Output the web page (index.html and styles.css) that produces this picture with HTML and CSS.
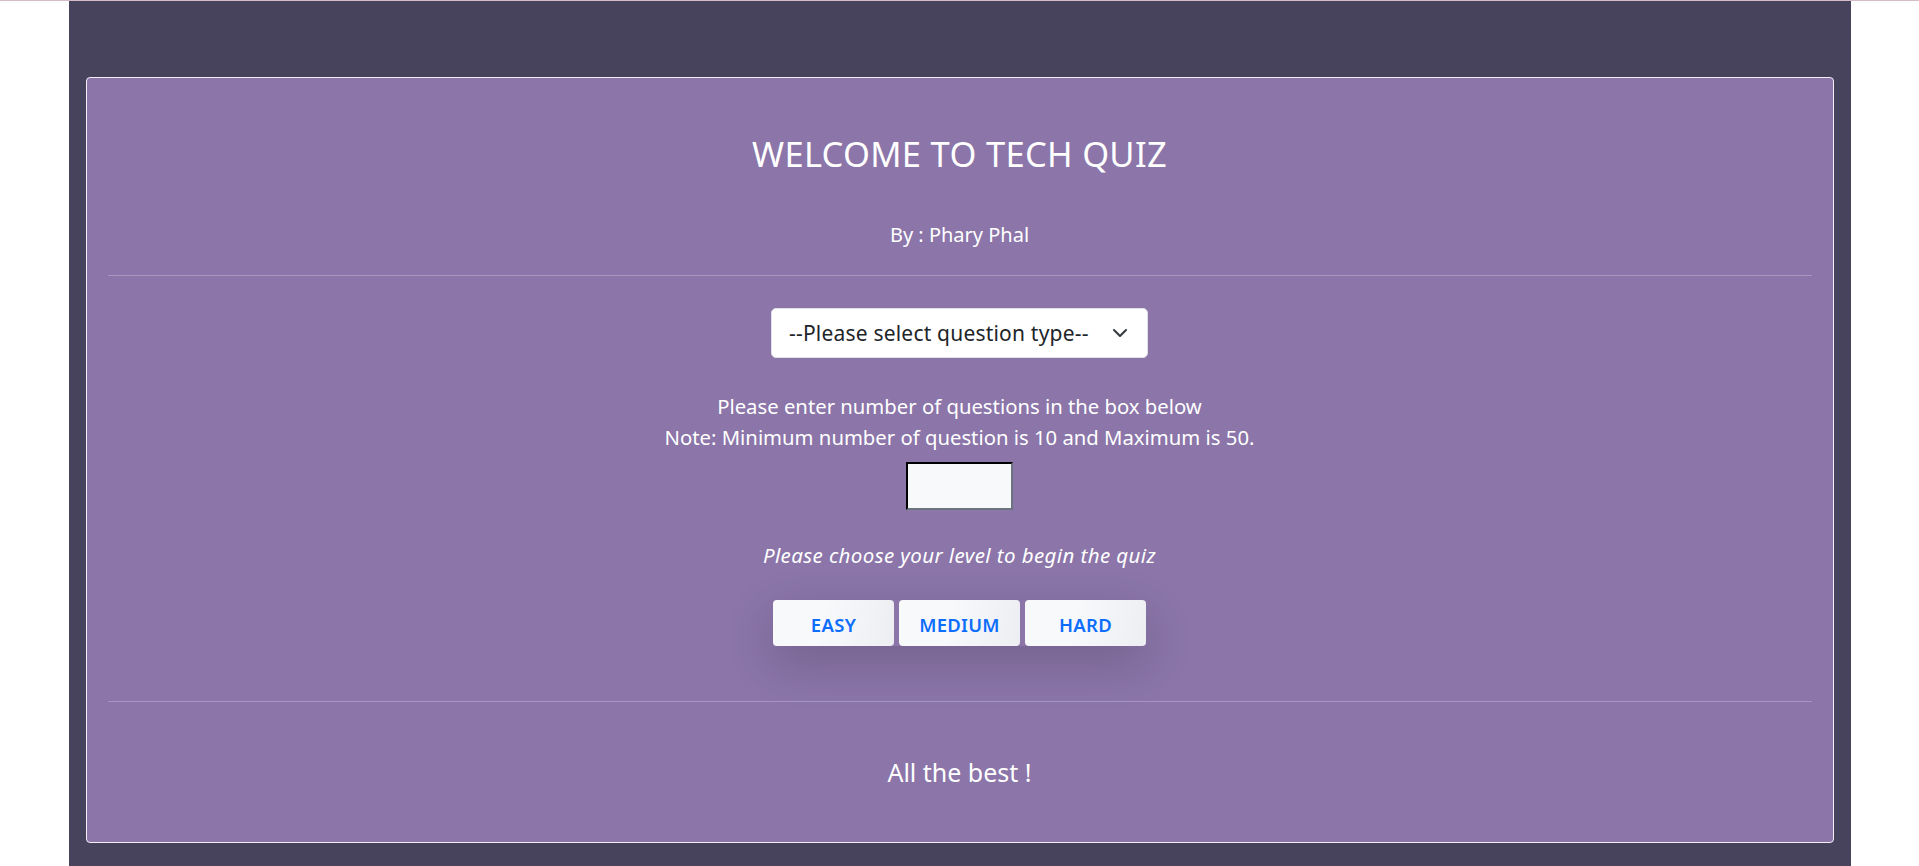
FILE: index.html
```html
<!DOCTYPE html>
<html lang="en">
<head>
<meta charset="utf-8">
<title>Tech Quiz</title>
<link rel="stylesheet" href="styles.css">
</head>
<body>
<div class="topline"></div>
<main class="page">
  <section class="card">
    <header class="card-head">
      <h1 class="title">WELCOME TO TECH QUIZ</h1>
      <p class="author">By : Phary Phal</p>
    </header>
    <div class="card-body">
      <div class="select-wrap">
        <select class="type-select">
          <option>--Please select question type--</option>
        </select>
        <svg class="chevron" width="16" height="16" viewBox="0 0 16 16"><path d="M2 5l6 6 6-6" fill="none" stroke="#343a40" stroke-width="2" stroke-linecap="round" stroke-linejoin="round"/></svg>
      </div>
      <p class="info">Please enter number of questions in the box below<br>Note: Minimum number of question is 10 and Maximum is 50.</p>
      <input class="count" type="text">
      <p class="choose">Please choose your level to begin the quiz</p>
      <div class="levels">
        <button class="level">EASY</button>
        <button class="level">MEDIUM</button>
        <button class="level">HARD</button>
      </div>
    </div>
    <footer class="card-foot">
      <p class="best">All the best !</p>
    </footer>
  </section>
</main>
</body>
</html>
```
FILE: styles.css
```css
* { box-sizing: border-box; }
html, body { margin: 0; padding: 0; }
body {
  background: #ffffff;
  font-family: "Noto Sans", "Open Sans", sans-serif;
  color: #ffffff;
  overflow: hidden;
}
.topline { height: 1px; background: #d5bcc7; }
.page {
  width: 1782px;
  margin: 0 auto;
  background: #48435c;
  padding: 76px 17px 40px;
  min-height: 900px;
}
.card {
  background: #8b75a9;
  border: 1px solid #f3f0f7;
  border-radius: 4px;
  padding: 0 21px;
  display: flex;
  flex-direction: column;
}
.card-head {
  text-align: center;
  border-bottom: 1px solid #a896c0;
  padding: 53px 0 28px;
}
.title {
  margin: 0;
  font-weight: 400;
  font-size: 34.5px;
  line-height: 46px;
  letter-spacing: 0.3px;
}
.author {
  margin: 46px 0 0;
  font-size: 20px;
  line-height: 24px;
}
.card-body {
  display: flex;
  flex-direction: column;
  align-items: center;
  padding: 32px 0 55px;
  border-bottom: 1px solid #a896c0;
}
.select-wrap { position: relative; width: 377px; height: 50px; }
.type-select {
  -webkit-appearance: none;
  appearance: none;
  width: 100%;
  height: 100%;
  border: 1px solid #dee2e6;
  border-radius: 5px;
  background: #ffffff;
  color: #212529;
  font-family: inherit;
  font-size: 21px;
  letter-spacing: 0.2px;
  padding: 0 40px 0 17px;
}
.chevron { position: absolute; right: 20px; top: 17px; pointer-events: none; }
.info {
  margin: 33px 0 0;
  text-align: center;
  font-size: 20.3px;
  line-height: 30.5px;
}
.count {
  margin-top: 10px;
  width: 107px;
  height: 48px;
  background: #f8f9fa;
  border: 2px inset #767676;
  border-color: #212529 #6c757d #6c757d #212529;
}
.choose {
  margin: 31px 0 0;
  font-style: italic;
  font-size: 20.5px;
  letter-spacing: 0.4px;
  line-height: 28px;
}
.levels {
  display: flex;
  gap: 5px;
  margin-top: 31px;
  box-shadow: 0 1rem 3rem rgba(0,0,0,0.175);
}
.level {
  width: 121px;
  height: 46px;
  border: 0;
  border-radius: 4px;
  background: linear-gradient(100deg, #f8f9fb 40%, #eceef2 100%);
  color: #0d6efd;
  font-family: inherit;
  font-weight: 600;
  font-size: 18.5px;
  letter-spacing: 0.3px;
  padding: 2px 0 0;
}
.card-foot { text-align: center; padding: 46px 0 46px; }
.best {
  margin: 0;
  font-size: 25px;
  line-height: 48px;
}
```
